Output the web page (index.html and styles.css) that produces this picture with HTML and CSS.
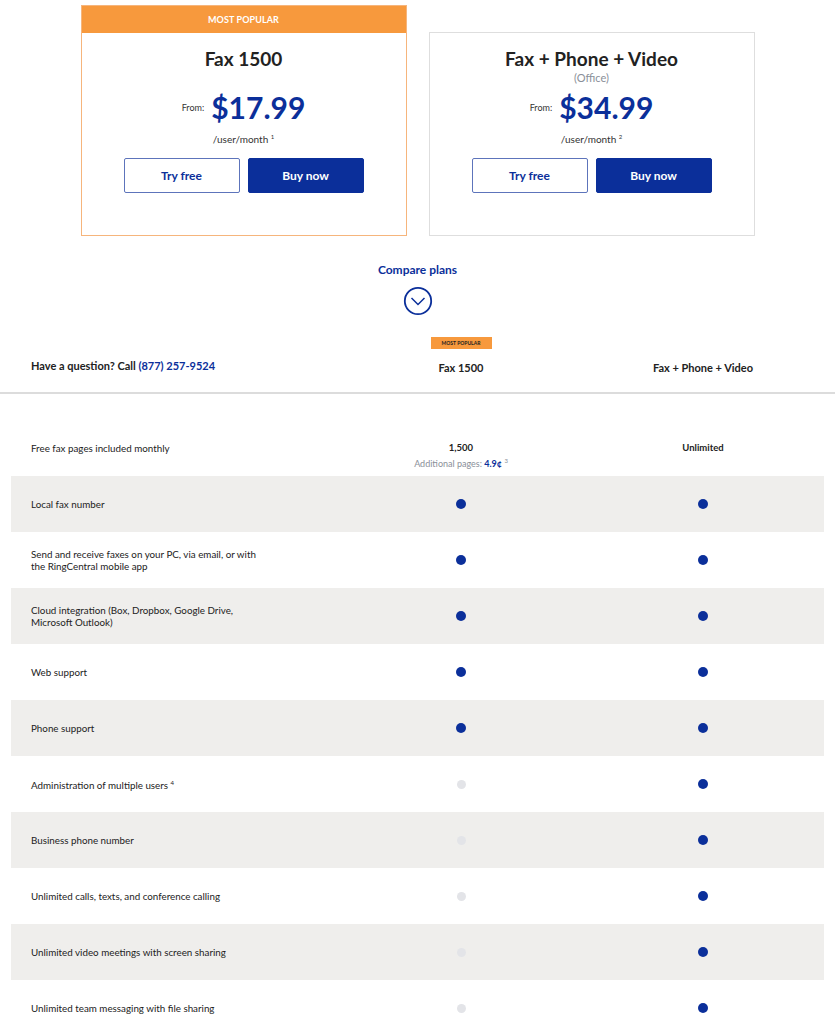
FILE: index.html
```html
<!DOCTYPE html>
<html lang="en">

<head>
  <meta charset="UTF-8">
  <meta name="viewport" content="width=device-width, initial-scale=1.0">
  <title>Fax plans</title>
  <link rel="stylesheet" href="styles.css">
</head>

<body>
  <div class="plans">
    <div class="plan popular">
      <div class="badge">MOST POPULAR</div>
      <div class="plan-body">
        <h2 class="plan-name">Fax 1500</h2>
        <div class="plan-sub"></div>
        <div class="price"><span class="from">From:</span><span class="amount">$17.99</span></div>
        <div class="per">/user/month <sup>1</sup></div>
        <div class="buttons">
          <a class="btn btn-outline" href="#">Try free</a>
          <a class="btn btn-fill" href="#">Buy now</a>
        </div>
      </div>
    </div>
    <div class="plan">
      <div class="plan-body">
        <h2 class="plan-name">Fax + Phone + Video</h2>
        <div class="plan-sub">(Office)</div>
        <div class="price"><span class="from">From:</span><span class="amount">$34.99</span></div>
        <div class="per">/user/month <sup>2</sup></div>
        <div class="buttons">
          <a class="btn btn-outline" href="#">Try free</a>
          <a class="btn btn-fill" href="#">Buy now</a>
        </div>
      </div>
    </div>
  </div>

  <div class="compare">
    <a href="#" class="compare-link">Compare plans</a>
    <svg class="compare-icon" width="30" height="30" viewBox="0 0 30 30">
      <circle cx="15" cy="15" r="13.2" fill="none" stroke="#0b2f9a" stroke-width="1.8" />
      <path d="M8.5 12 L15 18.5 L21.5 12" fill="none" stroke="#0b2f9a" stroke-width="1.5" />
    </svg>
  </div>

  <div class="table-head">
    <div class="row head-row">
      <div class="label question">Have a question? Call <a href="#">(877) 257-9524</a></div>
      <div class="col"><span class="mini-badge">MOST POPULAR</span><span class="col-title">Fax 1500</span></div>
      <div class="col"><span class="col-title">Fax + Phone + Video</span></div>
    </div>
  </div>

  <div class="table">
    <div class="row first">
      <div class="label">Free fax pages included monthly</div>
      <div class="col"><b>1,500</b><span class="extra">Additional pages: <b>4.9¢</b> <sup>3</sup></span></div>
      <div class="col"><b>Unlimited</b></div>
    </div>
    <div class="row gray">
      <div class="label">Local fax number</div>
      <div class="col"><span class="dot"></span></div>
      <div class="col"><span class="dot"></span></div>
    </div>
    <div class="row">
      <div class="label">Send and receive faxes on your PC, via email, or with the RingCentral mobile app</div>
      <div class="col"><span class="dot"></span></div>
      <div class="col"><span class="dot"></span></div>
    </div>
    <div class="row gray">
      <div class="label">Cloud integration (Box, Dropbox, Google Drive, Microsoft Outlook)</div>
      <div class="col"><span class="dot"></span></div>
      <div class="col"><span class="dot"></span></div>
    </div>
    <div class="row">
      <div class="label">Web support</div>
      <div class="col"><span class="dot"></span></div>
      <div class="col"><span class="dot"></span></div>
    </div>
    <div class="row gray">
      <div class="label">Phone support</div>
      <div class="col"><span class="dot"></span></div>
      <div class="col"><span class="dot"></span></div>
    </div>
    <div class="row">
      <div class="label">Administration of multiple users <sup>4</sup></div>
      <div class="col"><span class="dot off"></span></div>
      <div class="col"><span class="dot"></span></div>
    </div>
    <div class="row gray">
      <div class="label">Business phone number</div>
      <div class="col"><span class="dot off"></span></div>
      <div class="col"><span class="dot"></span></div>
    </div>
    <div class="row">
      <div class="label">Unlimited calls, texts, and conference calling</div>
      <div class="col"><span class="dot off"></span></div>
      <div class="col"><span class="dot"></span></div>
    </div>
    <div class="row gray">
      <div class="label">Unlimited video meetings with screen sharing</div>
      <div class="col"><span class="dot off"></span></div>
      <div class="col"><span class="dot"></span></div>
    </div>
    <div class="row">
      <div class="label">Unlimited team messaging with file sharing</div>
      <div class="col"><span class="dot off"></span></div>
      <div class="col"><span class="dot"></span></div>
    </div>
  </div>
</body>

</html>
```

FILE: styles.css
```css
body {
  margin: 0;
  background: #fff;
  font-family: Lato, "Noto Sans", sans-serif;
  color: #222;
}

a {
  text-decoration: none;
}

sup {
  font-size: 6px;
  vertical-align: 4px;
}

/* plan cards */
.plans {
  display: flex;
  justify-content: center;
  align-items: flex-end;
  gap: 22px;
  padding-top: 5px;
}

.plan {
  width: 326px;
  border: 1px solid #dedede;
  box-sizing: border-box;
}

.plan.popular {
  border-color: #f6b57c;
}

.badge {
  background: #f7993d;
  color: #fff;
  font-size: 9px;
  font-weight: 700;
  text-align: center;
  height: 27px;
  line-height: 27px;
  letter-spacing: 0.1px;
}

.plan-body {
  text-align: center;
  padding: 14px 0 42px;
}

.plan-name {
  margin: 0;
  font-size: 19px;
  line-height: 24px;
  font-weight: 700;
  color: #222;
}

.plan-sub {
  height: 14px;
  font-size: 11px;
  line-height: 14px;
  color: #8a8f99;
}

.price {
  display: flex;
  justify-content: center;
  align-items: center;
  gap: 7px;
  margin-top: 4px;
  height: 36px;
}

.from {
  font-size: 9px;
  color: #333;
}

.amount {
  font-size: 30px;
  font-weight: 700;
  color: #0b2f9a;
}

.per {
  font-size: 10px;
  line-height: 14px;
  margin-top: 5px;
  color: #333;
}

.buttons {
  display: flex;
  justify-content: center;
  gap: 8px;
  margin-top: 12px;
}

.btn {
  width: 116px;
  height: 35px;
  box-sizing: border-box;
  border-radius: 2px;
  font-size: 12px;
  font-weight: 700;
  line-height: 33px;
  border: 1px solid #0b2f9a;
}

.btn-outline {
  color: #0b2f9a;
  background: #fff;
  border-color: #5d74bb;
}

.btn-fill {
  color: #fff;
  background: #0b2f9a;
}

/* compare link */
.compare {
  display: flex;
  flex-direction: column;
  align-items: center;
  padding-top: 26px;
}

.compare-link {
  font-size: 12px;
  font-weight: 700;
  color: #0b2f9a;
}

.compare-icon {
  margin-top: 9px;
}

/* table */
.row {
  display: flex;
  margin: 0 11px;
  height: 56px;
  align-items: center;
}

.label {
  width: 329px;
  box-sizing: border-box;
  padding-left: 20px;
  padding-right: 84px;
  font-size: 9.8px;
  line-height: 12px;
  color: #222;
}

.col {
  width: 242px;
  display: flex;
  flex-direction: column;
  align-items: center;
  font-size: 9.5px;
  line-height: 12px;
}

.table-head {
  border-bottom: 2px solid #dcdcdc;
  margin-top: 21px;
}

.head-row {
  height: 55px;
  align-items: flex-start;
}

.question {
  font-size: 11px;
  font-weight: 700;
  padding-top: 23px;
  padding-right: 0;
}

.question a {
  color: #0b2f9a;
}

.mini-badge {
  background: #f7993d;
  color: #222;
  font-size: 5px;
  font-weight: 700;
  width: 61px;
  height: 12px;
  line-height: 12px;
  text-align: center;
}

.col-title {
  font-size: 11px;
  font-weight: 700;
  margin-top: 13px;
}

.head-row .col:last-child .col-title {
  margin-top: 25px;
}

.table {
  padding-top: 26px;
}

.row.first {
  align-items: flex-start;
  padding-top: 22px;
  height: 34px;
}

.extra {
  color: #8a8f99;
  font-size: 9px;
  margin-top: 1px;
}

.extra b {
  color: #0b2f9a;
}

.gray {
  background: #efeeec;
}

.dot {
  width: 10px;
  height: 10px;
  border-radius: 50%;
  background: #0b2f9a;
}

.dot.off {
  width: 9px;
  height: 9px;
  background: #e3e4e8;
}
```
